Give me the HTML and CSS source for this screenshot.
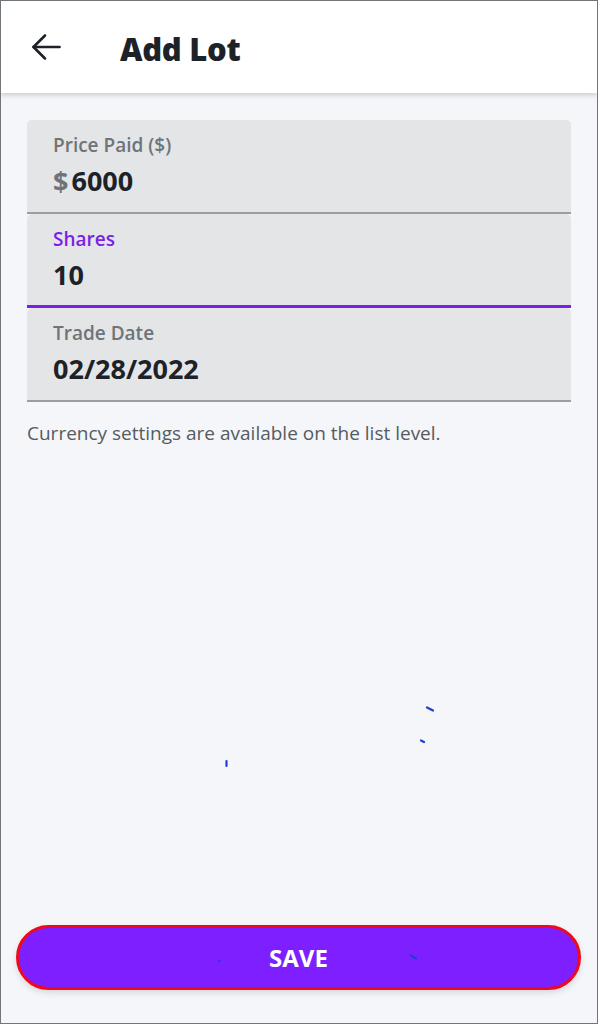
FILE: index.html
```html
<!DOCTYPE html>
<html lang="en">
<head>
  <meta charset="UTF-8">
  <title>Add Lot</title>
  <link rel="stylesheet" href="styles.css">
</head>
<body>
  <div class="screen">
    <header class="top-bar">
      <button class="back-btn" aria-label="Back">
        <svg width="30" height="30" viewBox="0 0 30 30" fill="none" stroke="#1d2228" stroke-width="2.6" stroke-linecap="round" stroke-linejoin="round">
          <path d="M28.5 15H2.5"/>
          <path d="M14 3.5L2.5 15L14 26.5"/>
        </svg>
      </button>
      <h1>Add Lot</h1>
    </header>

    <main class="lot-form">
      <div class="field">
        <label>Price Paid ($)</label>
        <div class="field-value"><span class="prefix">$</span>6000</div>
      </div>
      <div class="field active">
        <label>Shares</label>
        <div class="field-value">10</div>
      </div>
      <div class="field">
        <label>Trade Date</label>
        <div class="field-value">02/28/2022</div>
      </div>
      <p class="note">Currency settings are available on the list level.</p>
    </main>

    <footer class="actions">
      <button class="save-btn">SAVE</button>
    </footer>

    <!-- touch traces left on the screen -->
    <svg class="traces" width="598" height="1024" viewBox="0 0 598 1024" fill="none" stroke="#1f3fd1" stroke-width="2.2" stroke-linecap="round">
      <path d="M427 707.5l6 3"/>
      <path d="M421 740.5l3 1.5"/>
      <path d="M226.5 761v5"/>
      <path d="M219 961h0.5"/>
      <path d="M411 955.5l5 3"/>
    </svg>
  </div>
</body>
</html>
```

FILE: styles.css
```css
* {
  box-sizing: border-box;
}

body {
  margin: 0;
  font-family: 'Open Sans', 'Noto Sans', sans-serif;
  color: #1d2228;
}

.screen {
  position: relative;
  width: 598px;
  height: 1024px;
  display: flex;
  flex-direction: column;
  background-color: #f4f6f9;
  border: 1px solid #70757a;
  overflow: hidden;
}

.top-bar {
  height: 92px;
  flex-shrink: 0;
  display: flex;
  align-items: center;
  background-color: #fff;
  box-shadow: 0 2px 5px rgba(0, 0, 0, 0.18);
  position: relative;
  z-index: 1;
}

.back-btn {
  background: none;
  border: none;
  padding: 0;
  margin-left: 30px;
  width: 30px;
  height: 30px;
}

.top-bar h1 {
  margin: 4px 0 0 59px;
  font-size: 31px;
  font-weight: 800;
  letter-spacing: -0.3px;
}

.lot-form {
  flex: 1;
  padding: 27px 26px 0 26px;
}

.field {
  height: 94px;
  background-color: #e4e5e6;
  border-radius: 5px 5px 0 0;
  border-bottom: 2px solid #9b9d9f;
  padding: 12px 26px 0 26px;
}

.field.active {
  border-bottom: 3px solid #7b1fe6;
}

.field label {
  display: block;
  font-size: 19px;
  font-weight: 600;
  color: #6e7479;
  line-height: 26px;
}

.field.active label {
  color: #7b1fe6;
}

.field-value {
  margin-top: 5px;
  font-size: 27px;
  font-weight: 700;
  line-height: 36px;
  color: #1d2228;
}

.prefix {
  color: #6e7479;
  margin-right: 3px;
}

.note {
  margin: 18px 0 0 0;
  font-size: 19px;
  color: #545b61;
}

.actions {
  padding: 0 16px 33px 15px;
}

.save-btn {
  width: 100%;
  height: 65px;
  border: 3px solid #ee0a1c;
  border-radius: 33px;
  background-color: #7d1ffe;
  color: #fff;
  font-family: 'Open Sans', 'Noto Sans', sans-serif;
  font-size: 24px;
  font-weight: 700;
  box-shadow: 0 3px 6px rgba(0, 0, 0, 0.12);
}

.traces {
  position: absolute;
  top: -1px;
  left: -1px;
  pointer-events: none;
}
```
